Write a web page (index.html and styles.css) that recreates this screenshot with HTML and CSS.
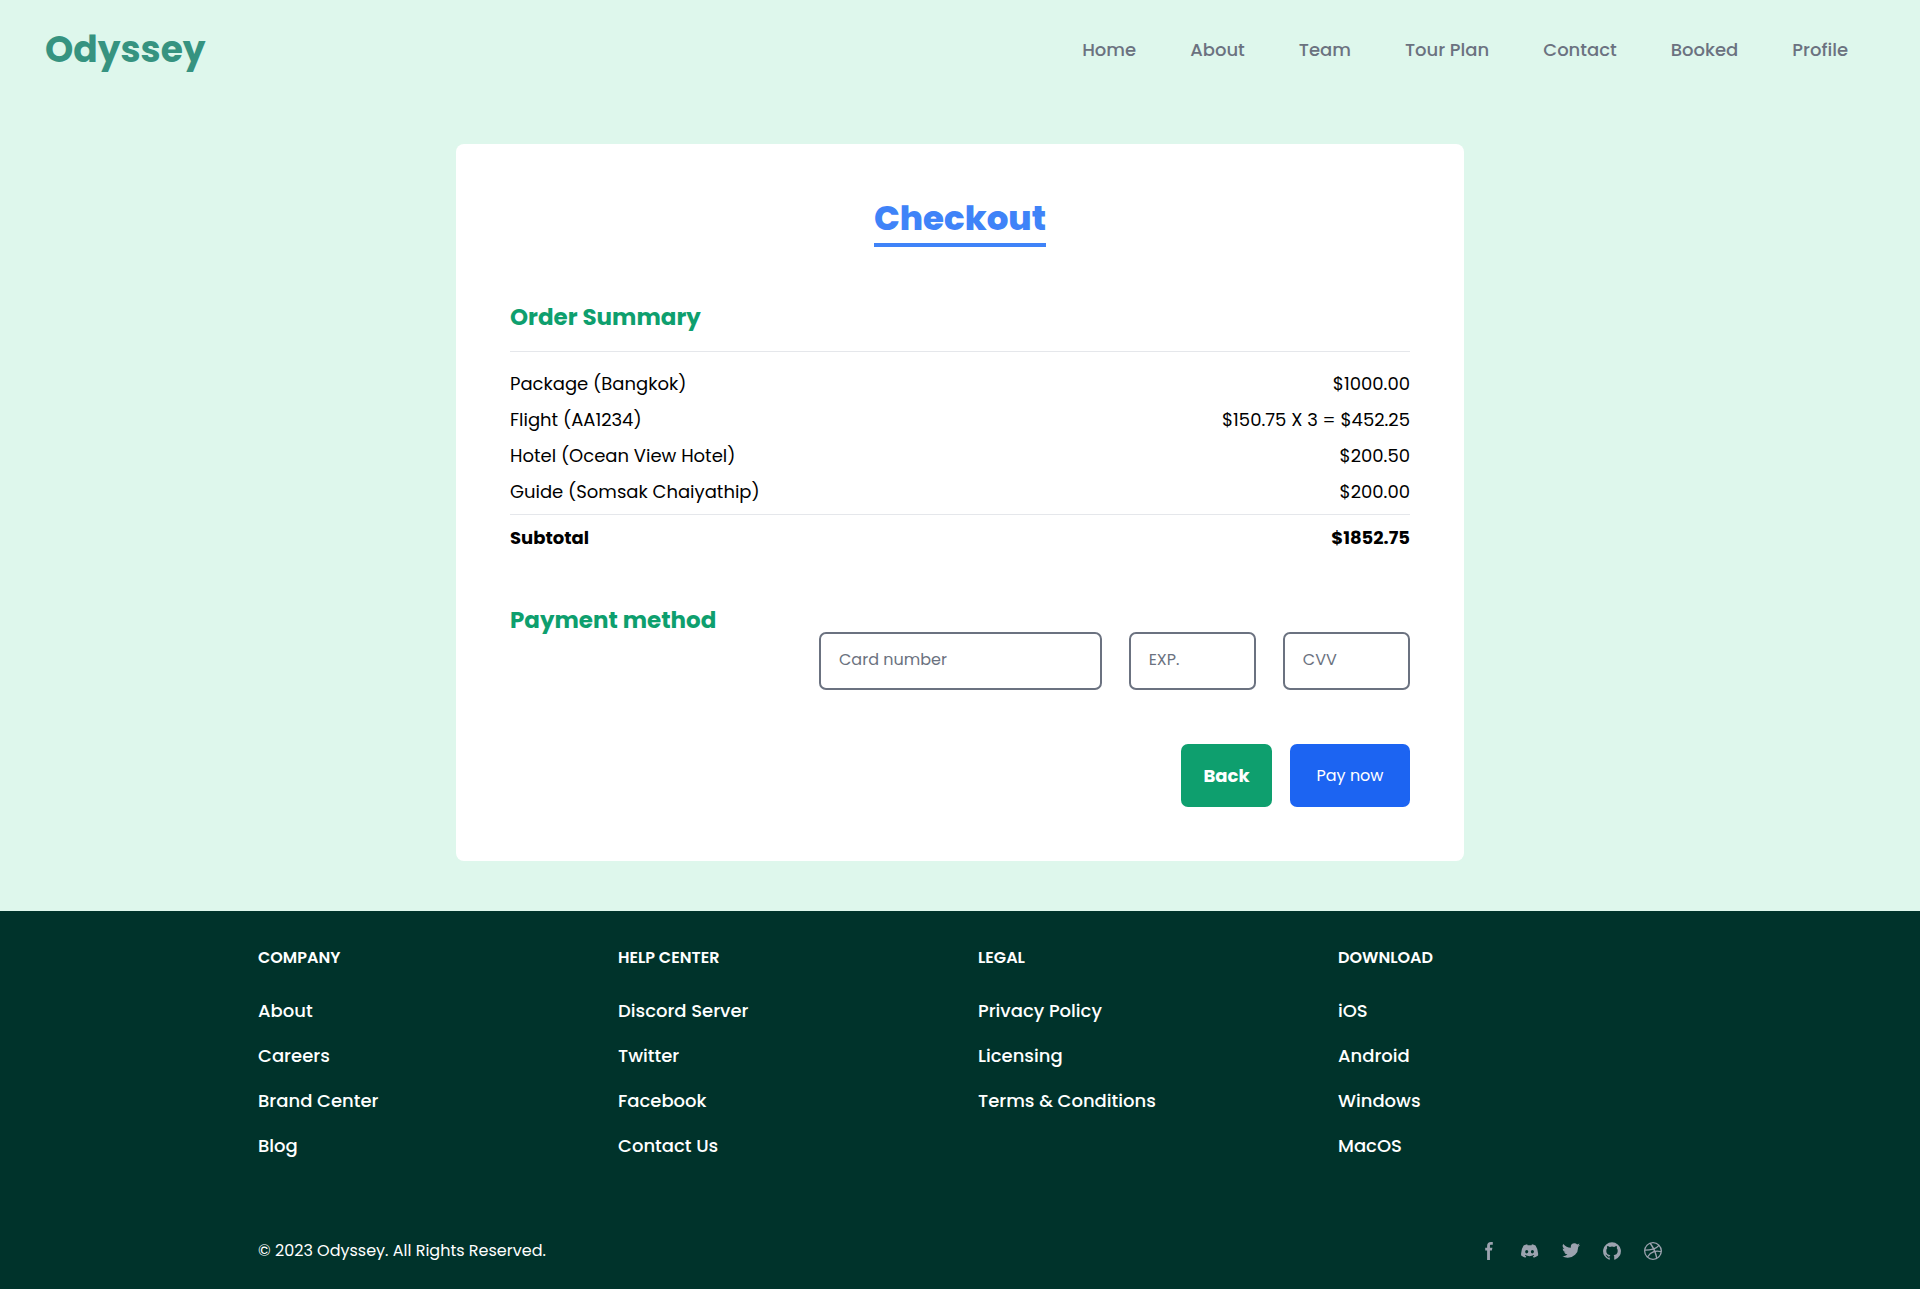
FILE: index.html
```html
<!DOCTYPE html>
<html lang="en">
<head>
  <meta charset="utf-8">
  <meta name="viewport" content="width=device-width, initial-scale=1">
  <title>Odyssey - Checkout</title>
  <link rel="stylesheet" href="styles.css">
</head>
<body>
  <header class="site-header">
    <a class="logo" href="#">Odyssey</a>
    <nav class="site-nav" aria-label="Main">
      <a href="#">Home</a>
      <a href="#">About</a>
      <a href="#">Team</a>
      <a href="#">Tour Plan</a>
      <a href="#">Contact</a>
      <a href="#">Booked</a>
      <a href="#">Profile</a>
    </nav>
  </header>

  <main class="page">
    <form class="card">
      <h1 class="card-title">Checkout</h1>

      <h2 class="section-title">Order Summary</h2>
      <table class="summary">
        <tbody>
          <tr><th scope="row">Package (Bangkok)</th><td>$1000.00</td></tr>
          <tr><th scope="row">Flight (AA1234)</th><td>$150.75 X 3 = $452.25</td></tr>
          <tr><th scope="row">Hotel (Ocean View Hotel)</th><td>$200.50</td></tr>
          <tr><th scope="row">Guide (Somsak Chaiyathip)</th><td>$200.00</td></tr>
        </tbody>
        <tfoot>
          <tr><th scope="row">Subtotal</th><td>$1852.75</td></tr>
        </tfoot>
      </table>

      <div class="payment">
        <h2 class="section-title">Payment method</h2>
        <div class="payment-fields">
          <input type="text" placeholder="Card number" aria-label="Card number">
          <input type="text" placeholder="EXP." aria-label="Expiry date">
          <input type="text" placeholder="CVV" aria-label="CVV">
        </div>
      </div>

      <div class="actions">
        <button class="btn btn-back" type="button">Back</button>
        <button class="btn btn-pay" type="submit">Pay now</button>
      </div>
    </form>
  </main>

  <footer class="site-footer">
    <div class="footer-inner">
      <div class="footer-columns">
        <section>
          <h2>Company</h2>
          <ul>
            <li><a href="#">About</a></li>
            <li><a href="#">Careers</a></li>
            <li><a href="#">Brand Center</a></li>
            <li><a href="#">Blog</a></li>
          </ul>
        </section>
        <section>
          <h2>Help center</h2>
          <ul>
            <li><a href="#">Discord Server</a></li>
            <li><a href="#">Twitter</a></li>
            <li><a href="#">Facebook</a></li>
            <li><a href="#">Contact Us</a></li>
          </ul>
        </section>
        <section>
          <h2>Legal</h2>
          <ul>
            <li><a href="#">Privacy Policy</a></li>
            <li><a href="#">Licensing</a></li>
            <li><a href="#">Terms &amp; Conditions</a></li>
          </ul>
        </section>
        <section>
          <h2>Download</h2>
          <ul>
            <li><a href="#">iOS</a></li>
            <li><a href="#">Android</a></li>
            <li><a href="#">Windows</a></li>
            <li><a href="#">MacOS</a></li>
          </ul>
        </section>
      </div>
      <div class="footer-bottom">
        <span class="copyright">© 2023 Odyssey. All Rights Reserved.</span>
        <div class="social">
          <a href="#" aria-label="Facebook"><svg viewBox="0 0 8 19"><path fill-rule="evenodd" d="M6.135 3H8V0H6.135a4.147 4.147 0 0 0-4.142 4.142V6H0v3h2v9.938h3V9h2.021l.592-3H5V3.591A.6.6 0 0 1 5.592 3h.543Z"/></svg></a>
          <a href="#" aria-label="Discord"><svg viewBox="0 0 21 16"><path d="M16.942 1.556a16.3 16.3 0 0 0-4.126-1.3 12.04 12.04 0 0 0-.529 1.1 15.175 15.175 0 0 0-4.573 0 11.585 11.585 0 0 0-.535-1.1 16.274 16.274 0 0 0-4.129 1.3A17.392 17.392 0 0 0 .182 13.218a15.785 15.785 0 0 0 4.963 2.521c.41-.564.773-1.16 1.084-1.785a10.63 10.63 0 0 1-1.706-.83c.143-.106.283-.217.418-.33a11.664 11.664 0 0 0 10.118 0c.137.113.277.224.418.33-.544.328-1.116.606-1.71.832a12.52 12.52 0 0 0 1.084 1.785 16.46 16.46 0 0 0 5.064-2.595 17.286 17.286 0 0 0-2.973-11.59ZM6.678 10.813a1.941 1.941 0 0 1-1.8-2.045 1.93 1.93 0 0 1 1.8-2.047 1.919 1.919 0 0 1 1.8 2.047 1.93 1.93 0 0 1-1.8 2.045Zm6.644 0a1.94 1.94 0 0 1-1.8-2.045 1.93 1.93 0 0 1 1.8-2.047 1.918 1.918 0 0 1 1.8 2.047 1.93 1.93 0 0 1-1.8 2.045Z"/></svg></a>
          <a href="#" aria-label="Twitter"><svg viewBox="0 0 20 17"><path fill-rule="evenodd" d="M20 1.892a8.178 8.178 0 0 1-2.355.635 4.074 4.074 0 0 0 1.8-2.235 8.344 8.344 0 0 1-2.605.98A4.13 4.13 0 0 0 13.85 0a4.068 4.068 0 0 0-4.1 4.038 4 4 0 0 0 .105.919A11.705 11.705 0 0 1 1.4.734a4.006 4.006 0 0 0 1.268 5.392 4.165 4.165 0 0 1-1.859-.5v.05A4.057 4.057 0 0 0 4.1 9.635a4.19 4.19 0 0 1-1.856.07 4.108 4.108 0 0 0 3.831 2.807A8.36 8.36 0 0 1 0 14.184 11.732 11.732 0 0 0 6.291 16 11.502 11.502 0 0 0 17.964 4.5c0-.177 0-.35-.012-.523A8.143 8.143 0 0 0 20 1.892Z"/></svg></a>
          <a href="#" aria-label="GitHub"><svg viewBox="0 0 20 20"><path fill-rule="evenodd" d="M10 .333A9.911 9.911 0 0 0 6.866 19.65c.5.092.678-.215.678-.477 0-.237-.01-1.017-.014-1.845-2.757.6-3.338-1.169-3.338-1.169a2.627 2.627 0 0 0-1.1-1.451c-.9-.615.07-.6.07-.6a2.084 2.084 0 0 1 1.518 1.021 2.11 2.11 0 0 0 2.884.823c.044-.503.268-.973.63-1.325-2.2-.25-4.516-1.1-4.516-4.9A3.832 3.832 0 0 1 4.7 7.068a3.56 3.56 0 0 1 .095-2.623s.832-.266 2.726 1.016a9.409 9.409 0 0 1 4.962 0c1.89-1.282 2.717-1.016 2.717-1.016.366.83.402 1.768.1 2.623a3.827 3.827 0 0 1 1.02 2.659c0 3.807-2.319 4.644-4.525 4.889a2.366 2.366 0 0 1 .673 1.834c0 1.326-.012 2.394-.012 2.72 0 .263.18.572.681.475A9.911 9.911 0 0 0 10 .333Z"/></svg></a>
          <a href="#" aria-label="Dribbble"><svg viewBox="0 0 20 20"><path fill-rule="evenodd" d="M10 0a10 10 0 1 0 10 10A10.009 10.009 0 0 0 10 0Zm6.613 4.614a8.523 8.523 0 0 1 1.93 5.32 20.094 20.094 0 0 0-5.949-.274c-.059-.149-.122-.292-.184-.441a23.879 23.879 0 0 0-.566-1.239 11.41 11.41 0 0 0 4.769-3.366ZM8 1.707a8.821 8.821 0 0 1 2-.238 8.5 8.5 0 0 1 5.664 2.152 9.608 9.608 0 0 1-4.476 3.087A45.758 45.758 0 0 0 8 1.707ZM1.642 8.262a8.57 8.57 0 0 1 4.73-5.981A53.998 53.998 0 0 1 9.54 7.222a32.078 32.078 0 0 1-7.9 1.04h.002Zm2.01 7.46a8.51 8.51 0 0 1-2.2-5.707v-.262a31.64 31.64 0 0 0 8.777-1.219c.243.477.477.964.692 1.449-.114.032-.227.067-.336.1a13.569 13.569 0 0 0-6.942 5.636l.009.003ZM10 18.556a8.508 8.508 0 0 1-5.243-1.8 11.717 11.717 0 0 1 6.7-5.332.509.509 0 0 1 .055-.02 35.65 35.65 0 0 1 1.819 6.476 8.476 8.476 0 0 1-3.331.676Zm4.772-1.462A37.232 37.232 0 0 0 13.113 11a12.513 12.513 0 0 1 5.321.364 8.56 8.56 0 0 1-3.66 5.73h-.002Z"/></svg></a>
        </div>
      </div>
    </div>
  </footer>
</body>
</html>
```
FILE: styles.css
```css
*,
*::before,
*::after {
  box-sizing: border-box;
}

body {
  margin: 0;
  background: #fff;
  color: #000;
  font-family: Poppins, Inter, sans-serif;
  font-size: 18px;
  line-height: 28px;
}

h1,
h2,
ul {
  margin: 0;
  padding: 0;
}

ul {
  list-style: none;
}

a {
  color: inherit;
  text-decoration: none;
}

/* Header */
.site-header {
  display: flex;
  align-items: center;
  justify-content: space-between;
  height: 100px;
  padding: 0 72px 0 45px;
  background: #def7ec;
}

.logo {
  color: #369380;
  font-size: 36px;
  font-weight: 700;
  line-height: 40px;
}

.site-nav {
  display: flex;
  gap: 54px;
  color: #6b7280;
  font-weight: 500;
}

/* Checkout card */
.page {
  padding: 44px 18px 50px;
  background: #def7ec;
}

.card {
  max-width: 1008px;
  margin: 0 auto;
  padding: 54px;
  border-radius: 8px;
  background: #fff;
}

.card-title {
  width: fit-content;
  margin: 0 auto 54px;
  padding-bottom: 5px;
  border-bottom: 4px solid #3f83f8;
  color: #3f83f8;
  font-size: 34px;
  font-weight: 800;
  line-height: 40px;
}

.section-title {
  color: #0e9f6e;
  font-size: 23px;
  font-weight: 700;
  line-height: 32px;
}

.summary {
  width: 100%;
  margin-top: 18px;
  border-top: 1px solid #e5e7eb;
  border-collapse: separate;
  border-spacing: 0;
}

.summary th,
.summary td {
  padding: 0 0 8px;
  font-weight: 400;
  text-align: left;
}

.summary td {
  text-align: right;
}

.summary tbody tr:first-child > * {
  padding-top: 18px;
}

.summary tfoot tr > * {
  padding: 9px 0 0;
  border-top: 1px solid #e5e7eb;
  font-weight: 700;
}

.payment {
  display: flex;
  justify-content: space-between;
  margin-top: 52px;
}

.payment-fields {
  display: grid;
  flex: 0 1 591px;
  grid-template-columns: 20fr 9fr 9fr;
  gap: 27px;
  padding-top: 28px;
}

.payment-fields input {
  width: 100%;
  min-width: 0;
  height: 58px;
  padding: 0 18px 4px;
  border: 2px solid #6b7280;
  border-radius: 7px;
  background: #fff;
  color: #000;
  font: inherit;
  font-size: 16px;
}

.payment-fields input::placeholder {
  color: #6b7280;
  opacity: 1;
}

.actions {
  display: flex;
  justify-content: flex-end;
  gap: 18px;
  margin-top: 54px;
}

.btn {
  height: 63px;
  border: 0;
  border-radius: 7px;
  color: #fff;
  font: inherit;
}

.btn-back {
  min-width: 91px;
  background: #0e9f6e;
  font-weight: 700;
}

.btn-pay {
  min-width: 120px;
  background: #1c64f2;
  font-size: 16px;
}

/* Footer */
.site-footer {
  background: #00332b;
  color: #fff;
}

.footer-inner {
  max-width: 1440px;
  margin: 0 auto;
  padding: 36px 18px 24px;
}

.footer-columns {
  display: grid;
  grid-template-columns: repeat(4, 1fr);
  gap: 36px;
}

.footer-columns h2 {
  margin-bottom: 28px;
  font-size: 16px;
  font-weight: 600;
  line-height: 22px;
  text-transform: uppercase;
}

.footer-columns ul {
  display: grid;
  gap: 17px;
  font-weight: 500;
}

.footer-bottom {
  display: flex;
  align-items: center;
  justify-content: space-between;
  margin-top: 77px;
}

.copyright {
  font-size: 16px;
}

.social {
  display: flex;
  gap: 23px;
  color: #9ca3af;
}

.social svg {
  display: block;
  width: 18px;
  height: 18px;
  fill: currentColor;
}
```
